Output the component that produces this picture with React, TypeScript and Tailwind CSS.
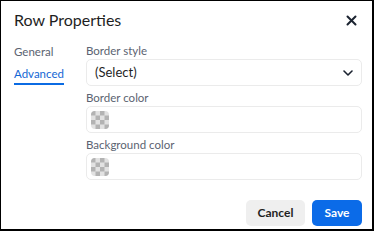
import * as React from "react";

const FONT = { fontFamily: 'Lato, "Noto Sans", sans-serif' };

function Checker() {
  return (
    <svg width="18" height="18" viewBox="0 0 18 18" className="shrink-0">
      <defs>
        <clipPath id="r">
          <rect x="0" y="0" width="18" height="18" rx="4" />
        </clipPath>
      </defs>
      <g clipPath="url(#r)">
        <rect width="18" height="18" fill="#e2e2e2" />
        {[0, 1, 2, 3].map((row) =>
          [0, 1, 2, 3].map((col) =>
            (row + col) % 2 === 0 ? (
              <rect key={`${row}-${col}`} x={col * 4.5} y={row * 4.5} width="4.5" height="4.5" fill="#b3b3b3" />
            ) : null,
          ),
        )}
      </g>
    </svg>
  );
}

function ColorField({ label }: { label: string }) {
  return (
    <div className="flex flex-col">
      <label className="mt-[4px] h-[15px] text-[11.5px] leading-[15px] text-[#5b6371]">{label}</label>
      <div className="mt-[1px] flex h-[27px] items-center rounded-[5px] border border-[#ebebeb] px-[4px]">
        <Checker />
      </div>
    </div>
  );
}

export default function App() {
  return (
    <div
      className="flex h-[231px] w-[374px] flex-col border-t border-l border-r-2 border-b-2 border-black bg-white"
      style={FONT}
    >
      <div className="flex h-[34px] items-center justify-between pl-[13px] pr-[15px] pt-[4px]">
        <h1 className="text-[16px] font-normal text-[#1f1f1f]">Row Properties</h1>
        <svg width="11" height="11" viewBox="0 0 11 11" className="text-[#1b2330]">
          <path d="M1.5 1.5 9.5 9.5M9.5 1.5 1.5 9.5" stroke="currentColor" strokeWidth="2" strokeLinecap="round" />
        </svg>
      </div>

      <div className="flex flex-1 pl-[13px] pr-[10px]">
        <nav className="flex w-[72px] shrink-0 flex-col pt-[9px] text-[11.5px]">
          <span className="h-[16px] leading-[16px] text-[#5b6371]">General</span>
          <span className="mt-[6px] w-fit border-b-2 border-[#0b6be3] pb-[1px] leading-[16px] text-[#1266d4]">
            Advanced
          </span>
        </nav>

        <div className="flex flex-1 flex-col pt-[8px]">
          <label className="h-[16px] text-[11.5px] leading-[16px] text-[#5b6371]">Border style</label>
          <div className="flex h-[27px] items-center justify-between rounded-[5px] border border-[#ebebeb] pl-[8px] pr-[8px]">
            <span className="text-[13px] text-[#1f1f1f]">(Select)</span>
            <svg width="10" height="6" viewBox="0 0 10 6" className="text-[#1b2330]">
              <path d="M1 1 5 5 9 1" fill="none" stroke="currentColor" strokeWidth="1.6" strokeLinecap="round" strokeLinejoin="round" />
            </svg>
          </div>
          <ColorField label="Border color" />
          <ColorField label="Background color" />

          <div className="mt-auto mb-[3px] flex justify-end gap-[7px]">
            <button className="h-[26px] w-[59px] rounded-[5px] bg-[#efefef] text-[12px] font-bold text-[#1f1f1f]">
              Cancel
            </button>
            <button className="h-[26px] w-[50px] rounded-[5px] bg-[#0b6be8] text-[12px] font-bold text-white">
              Save
            </button>
          </div>
        </div>
      </div>
    </div>
  );
}
